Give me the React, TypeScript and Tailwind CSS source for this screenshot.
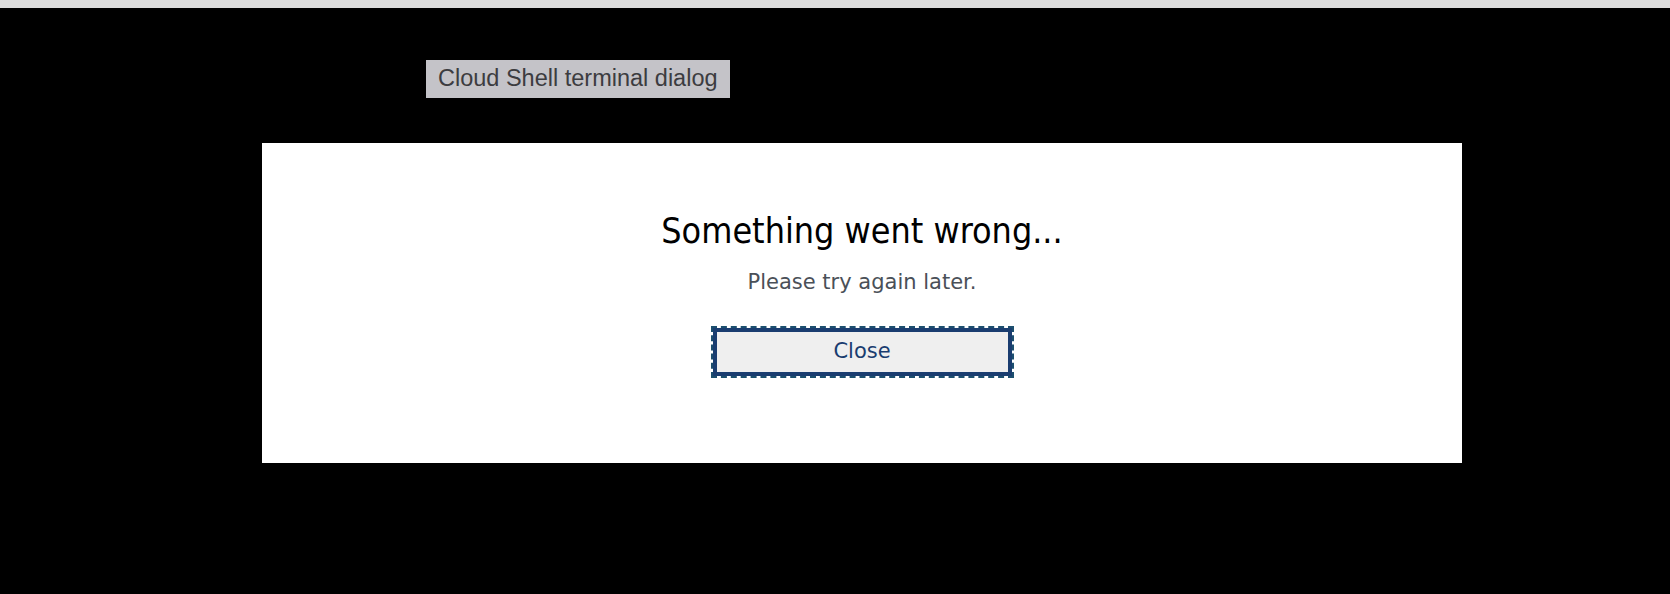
export default function App() {
  return (
    <div className="w-[1670px] h-[594px] bg-black flex flex-col overflow-hidden">
      <div className="h-[8px] bg-[#dcdcdc] shrink-0" />
      <div className="ml-[426px] mt-[52px] w-[304px] h-[38px] bg-[#c4c3c8] flex items-center pl-[12px] text-[23.5px] text-[#3c3c40] leading-none" style={{ fontFamily: '"Liberation Sans", Arial, sans-serif' }}>
        Cloud Shell terminal dialog
      </div>
      <div className="ml-[262px] mt-[45px] w-[1200px] h-[320px] bg-white flex flex-col items-center pt-[66px]" style={{ fontFamily: '"DejaVu Sans", Tahoma, Verdana, sans-serif' }}>
        <h1 className="text-[35.6px] leading-[44px] text-black font-stretch-condensed" style={{ fontFamily: '"DejaVu Sans Condensed", "DejaVu Sans", Tahoma, sans-serif' }}>Something went wrong...</h1>
        <p className="mt-[15px] text-[21px] leading-[28px] text-[#4a5058]">Please try again later.</p>
        <button className="mt-[32px] w-[299px] h-[48px] bg-[#efefef] border-[4px] border-solid border-[#1a3d70] outline-2 outline-dashed outline-[#1c4f6e] text-[21px] text-[#1a3d70] flex items-center justify-center">
          Close
        </button>
      </div>
    </div>
  );
}
